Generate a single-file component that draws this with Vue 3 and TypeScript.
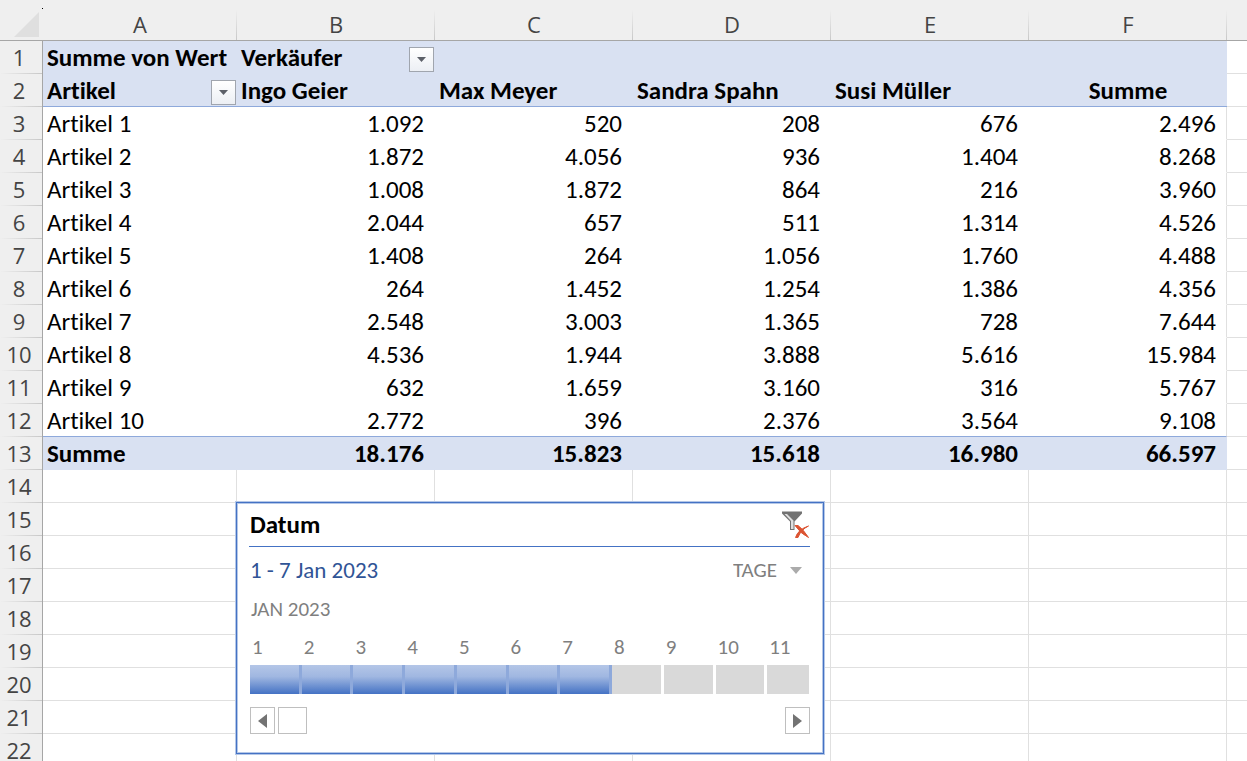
<script setup lang="ts">
import { ref } from 'vue'

interface Row {
  nr: number
  label: string
  values: string[]
}

const columns: string[] = ['A', 'B', 'C', 'D', 'E', 'F']
const sellers: string[] = ['Max Meyer', 'Sandra Spahn', 'Susi Müller']

const figures: string[][] = [
  ['1.092', '520', '208', '676', '2.496'],
  ['1.872', '4.056', '936', '1.404', '8.268'],
  ['1.008', '1.872', '864', '216', '3.960'],
  ['2.044', '657', '511', '1.314', '4.526'],
  ['1.408', '264', '1.056', '1.760', '4.488'],
  ['264', '1.452', '1.254', '1.386', '4.356'],
  ['2.548', '3.003', '1.365', '728', '7.644'],
  ['4.536', '1.944', '3.888', '5.616', '15.984'],
  ['632', '1.659', '3.160', '316', '5.767'],
  ['2.772', '396', '2.376', '3.564', '9.108'],
]
const totals: string[] = ['18.176', '15.823', '15.618', '16.980', '66.597']

const dataRows: Row[] = figures.map((values, i) => ({
  nr: i + 3,
  label: `Artikel ${i + 1}`,
  values,
}))
const emptyRows: number[] = [14, 15, 16, 17, 18, 19, 20, 21, 22]

const days: number[] = [1, 2, 3, 4, 5, 6, 7, 8, 9, 10, 11]
const lastSelected = ref(7)
const level = ref('TAGE')
const scroll = ref(0)
</script>

<template>
  <main class="sheet">
    <table class="grid">
      <colgroup>
        <col class="w-nr" />
        <col class="w-a" />
        <col v-for="n in 5" :key="n" class="w-col" />
        <col />
      </colgroup>
      <thead>
        <tr>
          <th class="corner">
            <button type="button" class="select-all" aria-label="Alles markieren">
              <svg width="25" height="25" viewBox="0 0 25 25"><path d="M25 0V25H0Z" fill="#dfdfdf" /></svg>
            </button>
          </th>
          <th v-for="c in columns" :key="c" class="col-head" scope="col">{{ c }}</th>
          <th class="col-head last"></th>
        </tr>
      </thead>
      <tbody>
        <tr class="band">
          <th class="row-head" scope="row">1</th>
          <td>Summe von Wert</td>
          <td class="with-drop">
            <div class="field">
              <span>Verkäufer</span>
              <button type="button" class="drop" aria-label="Verkäufer filtern">
                <svg width="9" height="5" viewBox="0 0 9 5"><path d="M0 0H9L4.500 5Z" fill="#5c6068" /></svg>
              </button>
            </div>
          </td>
          <td></td><td></td><td></td><td></td>
          <td class="outside"></td>
        </tr>
        <tr class="band underlined">
          <th class="row-head" scope="row">2</th>
          <td class="with-drop">
            <div class="field">
              <span>Artikel</span>
              <button type="button" class="drop" aria-label="Artikel filtern">
                <svg width="9" height="5" viewBox="0 0 9 5"><path d="M0 0H9L4.500 5Z" fill="#5c6068" /></svg>
              </button>
            </div>
          </td>
          <td>Ingo Geier</td>
          <td v-for="s in sellers" :key="s">{{ s }}</td>
          <td class="centered">Summe</td>
          <td class="outside"></td>
        </tr>
        <tr v-for="(row, i) in dataRows" :key="row.nr" class="data" :class="{ underlined: i === dataRows.length - 1 }">
          <th class="row-head" scope="row">{{ row.nr }}</th>
          <td>{{ row.label }}</td>
          <td v-for="(v, k) in row.values" :key="k" class="num">{{ v }}</td>
          <td class="outside"></td>
        </tr>
        <tr class="band">
          <th class="row-head" scope="row">13</th>
          <td>Summe</td>
          <td v-for="(v, k) in totals" :key="k" class="num">{{ v }}</td>
          <td class="outside"></td>
        </tr>
        <tr v-for="n in emptyRows" :key="n" class="empty">
          <th class="row-head" scope="row">{{ n }}</th>
          <td v-for="c in columns" :key="c"></td>
          <td class="outside"></td>
        </tr>
      </tbody>
    </table>

    <section class="timeline" aria-labelledby="timeline-title">
      <header class="title-row">
        <h2 id="timeline-title">Datum</h2>
        <button type="button" class="clear" aria-label="Filter löschen">
          <svg width="28" height="28" viewBox="0 0 28 28">
            <path d="M0 0.500H20V2.500L12.500 10.500V19H8V10.500L0 2.500Z" fill="#727272" />
            <path d="M2.500 3L9 10V18H11.500V9.500L5 3Z" fill="#dedede" />
            <path d="M14 15.500Q20 19 26 26M26 15.500Q18.500 20 14.500 26" fill="none" stroke="#fff" stroke-width="4" />
            <path d="M13 14.500L16 14.500Q21 18 26.500 26.500Q19 23 13 14.500Z" fill="#dc5432" stroke="#dc5432" />
            <path d="M26.500 15Q19 18.500 16 26.500L13.500 26.500Q16 18.500 26.500 15Z" fill="#dc5432" stroke="#dc5432" />
          </svg>
        </button>
      </header>
      <div class="range-row">
        <span class="range">1 - 7 Jan 2023</span>
        <label class="level">
          <select v-model="level" aria-label="Zeitebene">
            <option>TAGE</option>
            <option>MONATE</option>
            <option>QUARTALE</option>
            <option>JAHRE</option>
          </select>
          <svg width="12" height="7" viewBox="0 0 12 7"><path d="M0 0H12L6 7Z" fill="#ababab" /></svg>
        </label>
      </div>
      <div class="month">JAN 2023</div>
      <div class="days">
        <button
          v-for="d in days"
          :key="d"
          type="button"
          class="day"
          :class="{ on: d <= lastSelected }"
          @click="lastSelected = d"
        >
          <span class="day-nr">{{ d }}</span>
          <span class="bar"></span>
        </button>
      </div>
      <div class="scroller">
        <button type="button" class="step" aria-label="Zurück" @click="scroll = Math.max(0, scroll - 10)">
          <svg width="9" height="14" viewBox="0 0 9 14"><path d="M9 0V14L0 7Z" fill="#737373" /></svg>
        </button>
        <input v-model.number="scroll" type="range" min="0" max="100" aria-label="Zeitachse verschieben" />
        <button type="button" class="step" aria-label="Weiter" @click="scroll = Math.min(100, scroll + 10)">
          <svg width="9" height="14" viewBox="0 0 9 14"><path d="M0 0V14L9 7Z" fill="#737373" /></svg>
        </button>
      </div>
    </section>
  </main>
</template>

<style>
body {
  margin: 0;
}
</style>

<style scoped>
.sheet {
  position: relative;
  height: 100vh;
  overflow: hidden;
  background: #fff;
  color: #000;
  font-family: Carlito, Lato, "Liberation Sans", sans-serif;
  font-variant-ligatures: none;
}

button {
  margin: 0;
  padding: 0;
  border: 0;
  background: none;
  font: inherit;
  color: inherit;
}

svg {
  display: block;
}

.grid {
  width: 100%;
  table-layout: fixed;
  border-collapse: separate;
  border-spacing: 0;
  font-size: 25px;
}

.w-nr { width: 43px; }
.w-a { width: 194px; }
.w-col { width: 198px; }

th,
td {
  box-sizing: border-box;
  height: 33px;
  padding: 2px 0 0 4px;
  line-height: 30px;
  text-align: left;
  white-space: nowrap;
  border-right: 1px solid #e0e0e0;
  border-bottom: 1px solid #e0e0e0;
}

.corner,
.col-head {
  height: 41px;
  border-right: 0;
  border-bottom-color: #a6a6a6;
}

.corner {
  position: relative;
  padding: 0;
  background: #efefef;
}

.corner::after {
  content: "";
  position: absolute;
  top: 8px;
  right: 0;
  width: 1px;
  height: 1px;
  background: #000;
}

.select-all {
  display: block;
  margin: 8px 4px 0 auto;
  width: 25px;
}

.col-head {
  padding: 8px 0 0;
  font: 400 22px/30px "Open Sans", "Noto Sans", sans-serif;
  color: #444;
  text-align: center;
  background:
    linear-gradient(#efefef 10px, #c8c8c8) right / 1px 100% no-repeat,
    #efefef;
}

.col-head.last {
  background: #efefef;
}

.row-head {
  padding: 0 4px 2px 0;
  font: 400 22px/30px "Open Sans", "Noto Sans", sans-serif;
  color: #444;
  text-align: center;
  border-right-color: #a6a6a6;
  border-bottom: 0;
  background:
    linear-gradient(90deg, #efefef, #c8c8c8) bottom / 100% 1px no-repeat,
    #efefef;
}

.band td:not(.outside) {
  font-weight: 700;
  background: #d9e1f2;
  border-right: 0;
  border-bottom-color: #d9e1f2;
}

.data td:not(.outside) {
  border-right: 0;
  border-bottom-color: #fff;
}

.data td:nth-last-child(2):not(.outside) {
  padding-right: 10px;
  border-right: 1px solid #e0e0e0;
}

.underlined td:not(.outside) {
  border-bottom-color: #8ea9db;
}

.outside {
  border-right: 0;
}

td.num {
  padding-right: 11px;
  text-align: right;
}

td.centered {
  padding: 2px 0 0;
  text-align: center;
}

td.with-drop {
  padding-right: 1px;
}

.field {
  display: flex;
  justify-content: space-between;
  align-items: center;
  height: 30px;
}

.drop {
  box-sizing: border-box;
  flex: none;
  display: flex;
  align-items: center;
  justify-content: center;
  width: 25px;
  height: 25px;
  margin-top: 2px;
  border: 1px solid #a0a5ae;
  background: linear-gradient(#fff, #eceff4);
}

.timeline {
  position: absolute;
  left: 236px;
  top: 502px;
  box-sizing: border-box;
  width: 588px;
  height: 252px;
  padding: 0 14px 0 13px;
  border: 1px solid #4472c4;
  box-shadow: 0 0 0 1px #b4c7e7, inset 0 0 0 1px #b4c7e7;
  background: #fff;
}

.title-row {
  display: flex;
  justify-content: space-between;
  align-items: center;
  height: 43px;
  margin: 0 -1px;
  border-bottom: 1px solid #4472c4;
}

h2 {
  margin: 0 0 0 1px;
  font-size: 25px;
  line-height: 30px;
  font-weight: 700;
}

.range-row {
  display: flex;
  justify-content: space-between;
  align-items: center;
  height: 46px;
}

.range {
  font-size: 23px;
  line-height: 28px;
  color: #305496;
}

.level {
  display: flex;
  align-items: center;
  gap: 11px;
  margin-right: 7px;
}

select {
  appearance: none;
  width: 46px;
  padding: 0;
  border: 0;
  background: none;
  font: 21px/26px Carlito, Lato, sans-serif;
  color: #7f7f7f;
}

.month {
  padding-left: 1px;
  font-size: 21px;
  line-height: 32px;
  color: #7f7f7f;
}

.days {
  display: grid;
  grid-template-columns: repeat(10, 52fr) 42fr;
  padding-top: 8px;
}

.day {
  display: block;
  text-align: left;
}

.day-nr {
  display: block;
  padding: 0 0 4px 2px;
  font-size: 21px;
  line-height: 28px;
  color: #7f7f7f;
}

.bar {
  display: block;
  box-sizing: border-box;
  height: 29px;
  border-right: 3px solid #fff;
  background: #d9d9d9;
}

.day:last-child .bar {
  border-right: 0;
}

.on .bar {
  border-right-color: #8ea9db;
  background: linear-gradient(#b4c6e7, #a0b7e1 40%, #4472c4) padding-box;
}

.scroller {
  display: flex;
  gap: 3px;
  margin-top: 13px;
  margin-right: -1px;
}

.step {
  box-sizing: border-box;
  flex: none;
  display: flex;
  align-items: center;
  justify-content: center;
  width: 25px;
  height: 27px;
  border: 1px solid #bfbfbf;
}

input[type="range"] {
  appearance: none;
  flex: 1;
  min-width: 0;
  height: 27px;
  margin: 0;
  background: none;
}

input[type="range"]::-webkit-slider-thumb {
  appearance: none;
  box-sizing: border-box;
  width: 29px;
  height: 27px;
  border: 1px solid #bfbfbf;
  border-radius: 0;
  background: #fff;
}
</style>
